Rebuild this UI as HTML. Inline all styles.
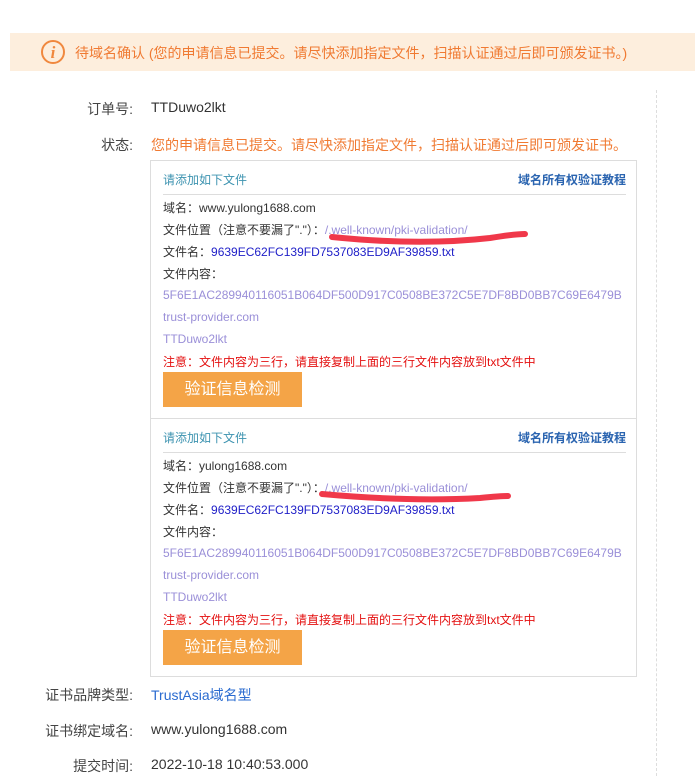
<!DOCTYPE html>
<html><head><meta charset="utf-8">
<style>
*{margin:0;padding:0;box-sizing:border-box}
body{width:695px;height:776px;background:#fff;position:relative;overflow:hidden;font-family:"Liberation Sans","Noto Sans CJK SC",sans-serif;color:#333}
.a{position:absolute;white-space:nowrap}
.banner{position:absolute;left:10px;top:33px;width:685px;height:38px;background:#fdeedd}
.ic{position:absolute;left:41px;top:40px;width:24px;height:24px;border:2px solid #f0883e;border-radius:50%;color:#f0883e;font:italic bold 17px "Liberation Serif",serif;text-align:center;line-height:21px}
.lbl{position:absolute;width:133px;text-align:right;font-size:14px;color:#444;left:0}
.val{position:absolute;left:151px;font-size:14px}
.box{position:absolute;left:150px;width:487px;border:1px solid #ddd}
.t{font-size:12px;color:#3d93b0}
.r{font-size:12px;color:#2a64b0;font-weight:bold;right:10px}
.hr{position:absolute;left:12px;right:10px;height:1px;background:#ddd}
.l{left:12px;font-size:12px;color:#333}
.p{color:#9a8fd8}
.f{color:#2020c8}
.red{color:#e41010}
.btn{position:absolute;left:12px;width:139px;height:35px;background:#f4a447;color:#fff;font-size:16px;text-align:center;line-height:35px}
</style></head><body>
<div class="banner"></div>
<div class="ic">i</div>
<div class="a" style="left:75px;top:43px;font-size:14px;color:#f07a32">待域名确认 (您的申请信息已提交。请尽快添加指定文件，扫描认证通过后即可颁发证书。)</div>
<div style="position:absolute;left:656px;top:90px;height:686px;border-left:1px dashed #ddd"></div>

<div class="lbl" style="top:99px">订单号:</div>
<div class="val" style="top:99px;color:#333">TTDuwo2lkt</div>
<div class="lbl" style="top:135px">状态:</div>
<div class="val" style="top:135px;color:#f07a32">您的申请信息已提交。请尽快添加指定文件，扫描认证通过后即可颁发证书。</div>

<div class="box" style="top:160px;height:259px">
<div class="a t" style="left:12px;top:10px">请添加如下文件</div>
<div class="a r" style="top:10px">域名所有权验证教程</div>
<div class="hr" style="top:33px"></div>
<div class="a l" style="top:38px">域名：www.yulong1688.com</div>
<div class="a l" style="top:60px">文件位置（注意不要漏了"."）：<span class="p">/.well-known/pki-validation/</span></div>
<div class="a l" style="top:82px">文件名：<span class="f">9639EC62FC139FD7537083ED9AF39859.txt</span></div>
<div class="a l" style="top:104px">文件内容：</div>
<div class="a l p" style="top:127px">5F6E1AC289940116051B064DF500D917C0508BE372C5E7DF8BD0BB7C69E6479B</div>
<div class="a l p" style="top:149px">trust-provider.com</div>
<div class="a l p" style="top:171px">TTDuwo2lkt</div>
<div class="a l red" style="top:192px">注意：文件内容为三行，请直接复制上面的三行文件内容放到txt文件中</div>
<div class="btn" style="top:211px">验证信息检测</div>
</div>

<div class="box" style="top:418px;height:259px">
<div class="a t" style="left:12px;top:10px">请添加如下文件</div>
<div class="a r" style="top:10px">域名所有权验证教程</div>
<div class="hr" style="top:33px"></div>
<div class="a l" style="top:38px">域名：yulong1688.com</div>
<div class="a l" style="top:60px">文件位置（注意不要漏了"."）：<span class="p">/.well-known/pki-validation/</span></div>
<div class="a l" style="top:82px">文件名：<span class="f">9639EC62FC139FD7537083ED9AF39859.txt</span></div>
<div class="a l" style="top:104px">文件内容：</div>
<div class="a l p" style="top:127px">5F6E1AC289940116051B064DF500D917C0508BE372C5E7DF8BD0BB7C69E6479B</div>
<div class="a l p" style="top:149px">trust-provider.com</div>
<div class="a l p" style="top:171px">TTDuwo2lkt</div>
<div class="a l red" style="top:192px">注意：文件内容为三行，请直接复制上面的三行文件内容放到txt文件中</div>
<div class="btn" style="top:211px">验证信息检测</div>
</div>

<svg style="position:absolute;left:0;top:0" width="695" height="776">
<path d="M332 237 Q420 246 490 238 Q515 234 525 234" stroke="#f0384a" stroke-width="6" fill="none" stroke-linecap="round"/>
<path d="M322 494 Q410 502 480 498 Q500 496 508 496" stroke="#f0384a" stroke-width="6" fill="none" stroke-linecap="round"/>
</svg>

<div class="lbl" style="top:685px">证书品牌类型:</div>
<div class="val" style="top:685px;color:#2a6bd0">TrustAsia域名型</div>
<div class="lbl" style="top:721px">证书绑定域名:</div>
<div class="val" style="top:721px;color:#333">www.yulong1688.com</div>
<div class="lbl" style="top:756px">提交时间:</div>
<div class="val" style="top:756px;color:#333">2022-10-18 10:40:53.000</div>
</body></html>
